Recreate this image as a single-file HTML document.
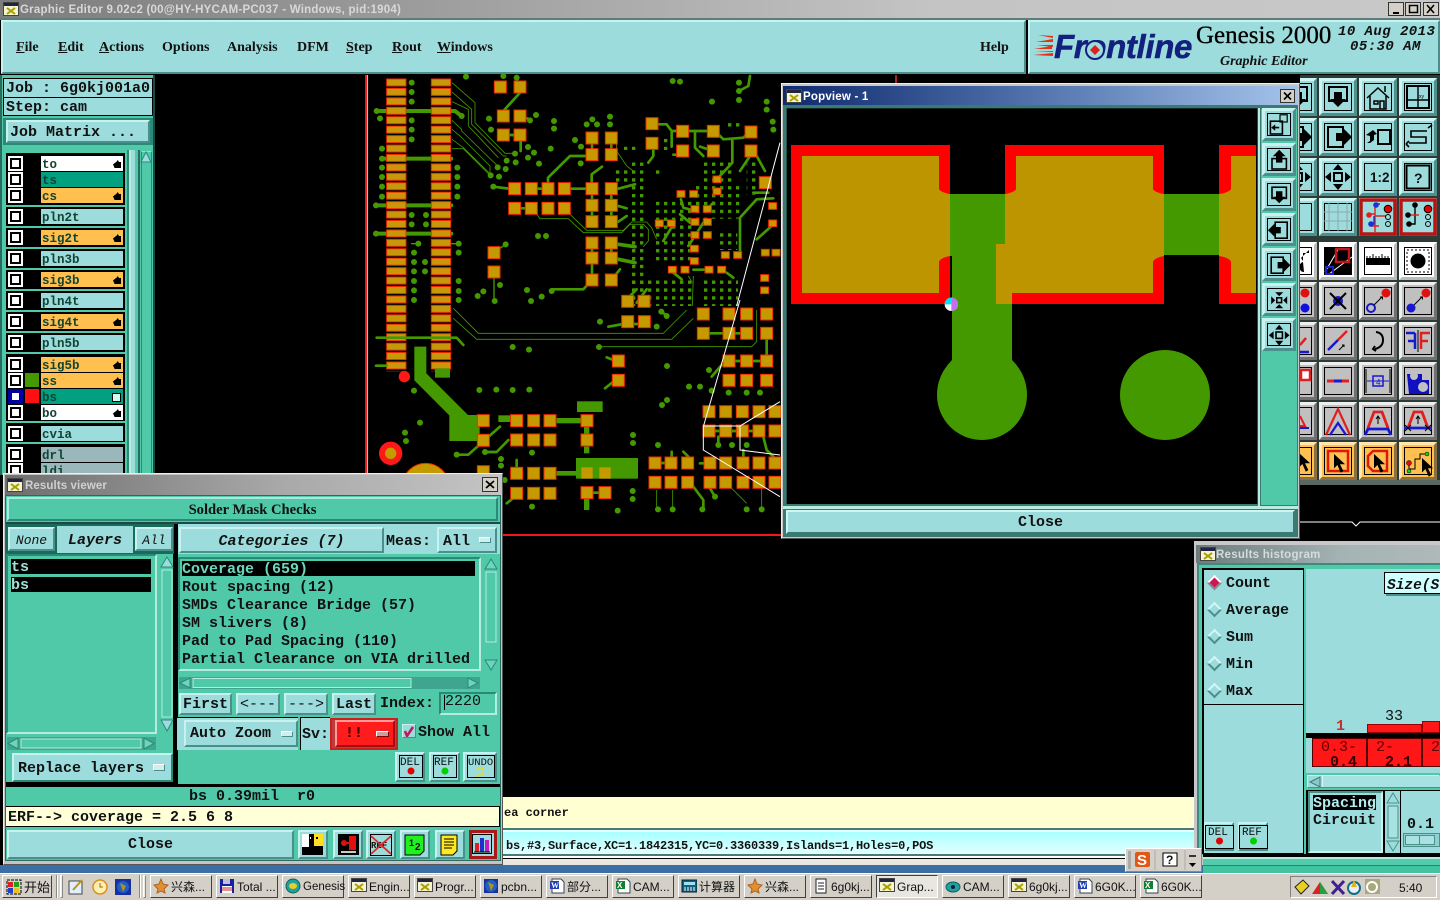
<!DOCTYPE html>
<html><head><meta charset="utf-8"><title>Graphic Editor</title>
<style>
html,body{margin:0;padding:0;width:1440px;height:900px;overflow:hidden;background:#000}
div{position:absolute;box-sizing:border-box}
svg{position:absolute;display:block}
.m{font:bold 15px/18px "Liberation Mono",monospace;color:#111;white-space:pre;margin-top:1px}
.b{display:flex;align-items:center;justify-content:center;background:#9cdcdc;border:2px solid;border-color:#c8f2f0 #4a8f8a #4a8f8a #c8f2f0;font:bold 15px "Liberation Mono",monospace;color:#111;white-space:pre}
.tb{font:bold 11.5px "Liberation Sans",sans-serif;color:#d8d8d8;white-space:pre;line-height:18px;margin-top:1px}
.mn{font:bold 14px/18px "Liberation Serif",serif;color:#111;top:39px;white-space:pre}
.mn u{text-decoration:underline}
.cb{left:8px;width:15px;height:15px;background:#fff}
.cb:after{content:"";position:absolute;left:2px;top:2px;width:11px;height:11px;border:2px solid #000;background:#fff;box-sizing:border-box}
.ln{left:41px;width:82px;height:15px;font:bold 12.5px/18px "Liberation Mono",monospace;color:#143;padding-left:1px;white-space:pre}
.y{background:#ffc050}.w{background:#fff}.g{background:#00a080}.c{background:#9cdcdc}.d{background:#9ab8bc}
.h{position:absolute;right:2px;top:4px;width:8px;height:8px;background:#000;clip-path:polygon(0 55%,45% 20%,60% 0,75% 25%,100% 25%,100% 100%,20% 100%)}
.k{background:#000;left:6px;width:119px}
.task{height:23px;top:875px;background:#d4d0c8;border:1px solid;border-color:#fff #404040 #404040 #fff;font:12px/23px "Liberation Sans","Noto Sans CJK SC",sans-serif;color:#111;white-space:pre;padding-left:20px}
.task svg{left:2px;top:2px}
.rad{left:1209px;width:11px;height:11px;transform:rotate(45deg);background:#9cdcdc;border:2px solid;border-color:#d4f6f4 #4a8f8a #4a8f8a #d4f6f4}
</style></head><body>

<!-- PCB canvas -->
<svg width="1440" height="900" style="left:0;top:0">
<defs>
<rect id="P" x="-18" y="-18" width="36" height="36" fill="#c49a00" stroke="#f02c00" stroke-width="3"/>
<rect id="Q" x="-12" y="-10" width="24" height="20" fill="#c49a00" stroke="#f02c00" stroke-width="3"/>
<circle id="V" r="9" fill="#449900"/>
<pattern id="S" x="78" y="6" width="134" height="28.3" patternUnits="userSpaceOnUse"><rect x="2" y="3" width="58" height="21" fill="#c8980a" stroke="#f02c00" stroke-width="3"/></pattern>
<pattern id="D" width="24" height="23.6" patternUnits="userSpaceOnUse"><rect width="10" height="10" fill="#449900"/></pattern>
<g id="AD" fill="#000"><rect x="10" y="9" width="18" height="14" fill="none" stroke="#000" stroke-width="2"/><path d="M15 14h8v7h4l-8 8-8-8h4z"/></g>
<g id="AU" fill="#000"><rect x="10" y="17" width="18" height="13" fill="none" stroke="#000" stroke-width="2"/><path d="M19 6l8 8h-4v8h-8v-8h-4z"/></g>
<g id="AL" fill="#000"><rect x="14" y="9" width="15" height="20" fill="none" stroke="#000" stroke-width="2"/><path d="M5 19l8-8v4h8v8h-8v4z"/></g>
<g id="AR" fill="#000"><rect x="9" y="9" width="15" height="20" fill="none" stroke="#000" stroke-width="2"/><path d="M33 19l-8-8v4h-8v8h8v4z"/></g>
<g id="ZO" fill="#000"><rect x="16" y="16" width="6" height="6" fill="none" stroke="#000" stroke-width="2"/><path d="M19 14l-5-5h10zM19 24l-5 5h10zM14 19l-5-5v10zM24 19l5-5v10z"/></g>
<g id="ZI" fill="#000"><rect x="15" y="15" width="8" height="8" fill="none" stroke="#000" stroke-width="2"/><path d="M19 6l-5 6h10zM19 32l-5-6h10zM6 19l6-5v10zM32 19l-6-5v10z"/></g>
<g id="BT"><rect width="38" height="38" fill="#9cdcdc"/><path d="M0 0h38l-3 3H3v32l-3 3z" fill="#d0f4f2"/><path d="M38 38H0l3-3h32V3l3-3z" fill="#4f8f8c"/><rect x="5.500" y="5.500" width="27" height="27" fill="none" stroke="#000"/></g>
<g id="BG"><rect width="38" height="38" fill="#c0c0c0"/><path d="M0 0h38l-3 3H3v32l-3 3z" fill="#eee"/><path d="M38 38H0l3-3h32V3l3-3z" fill="#707070"/><rect x="5.500" y="5.500" width="27" height="27" fill="none" stroke="#000"/></g>
<g id="BO"><rect width="38" height="38" fill="#ffc050"/><path d="M0 0h38l-3 3H3v32l-3 3z" fill="#ffe8b0"/><path d="M38 38H0l3-3h32V3l3-3z" fill="#8a7040"/><rect x="5.500" y="5.500" width="27" height="27" fill="none" stroke="#000"/></g>
<g id="BW"><rect width="38" height="38" fill="#fff"/><path d="M38 38H0l3-3h32V3l3-3z" fill="#bbb"/><rect x="5.500" y="5.500" width="27" height="27" fill="#fff" stroke="#000"/></g>
<path id="CU" transform="scale(.85)" d="M0 0v17l4-4 4 9 3-2-4-8h6z" fill="#000"/>
</defs>

<rect x="365" y="75" width="2" height="461" fill="#f01818"/><rect x="367" y="75" width="1" height="461" fill="#a0d8e8"/>
<rect x="365" y="534" width="420" height="2" fill="#f01818"/>
<rect x="895" y="75" width="2" height="10" fill="#b02020"/>

<!-- zoom group A -->
<g transform="translate(360 76) scale(.33333)">
<g fill="none" stroke="#449900" stroke-width="12" stroke-linecap="round" stroke-linejoin="round">
<path d="M60 105H285L305 120M66 248H274M48 388H274M48 473H274"/>
</g>
<rect x="78" y="6" width="62" height="880" fill="url(#S)"/>
<rect x="212" y="6" width="62" height="880" fill="url(#S)"/>
<g fill="url(#D)">
<rect x="792" y="208" width="38" height="14"/><rect x="816" y="256" width="48" height="390"/><rect x="768" y="280" width="48" height="50"/><rect x="888" y="370" width="120" height="190"/><rect x="888" y="280" width="24" height="14"/><rect x="1008" y="328" width="130" height="100"/><rect x="1024" y="256" width="96" height="70"/><rect x="1072" y="462" width="60" height="60"/><rect x="1160" y="256" width="40" height="100"/><rect x="816" y="600" width="180" height="90"/><rect x="1024" y="600" width="110" height="90"/><rect x="1096" y="140" width="48" height="16"/><rect x="912" y="186" width="12" height="36"/>
</g>
<g fill="none" stroke="#449900" stroke-width="8" stroke-linecap="round" stroke-linejoin="round">
<path d="M480 50L430 105M430 177H480M480 120L510 130M482 180V225M564 320V305L630 240H680M695 320V295L726 272M633 338H680M482 397H497M400 332L448 338M533 338H547M696 205V218M696 355V370M696 405V420M696 520V530M696 565V595M754 355V372M754 205V218M754 404V420M754 520V530M775 338L825 325M775 390L800 397M775 437L800 420M696 612L670 640H575M754 612L780 580M895 145H920L935 165H1045M935 165V212M1005 166V215L1030 240M1075 175L1090 190L1150 185L1160 175M1117 190V260L1075 305M1170 240L1140 285M1190 240L1215 285M880 220V240L865 260M1137 45L1165 30L1170 0M963 370L970 395L1005 405M1042 370M1030 440L985 510M960 415L990 440M1240 367L1190 370L1140 425V540M1225 350H1180M1235 450L1190 490M940 445L910 495M1060 380L1042 399M940 590L965 610M1000 581H1040M1100 590L1120 605M940 236H968M1020 212L1060 225M830 640L790 680M860 640L830 680"/>
<path d="M775 505L825 512M775 550L825 560" stroke-width="11"/>
<path d="M402 605V675M402 530L437 505M155 503H175M292 503H274" stroke-width="4"/>
</g>
<g fill="none" stroke="#449900" stroke-width="2.500">
<path d="M276 20L345 80V140L435 232H465M276 48L335 100V145L430 240H440M276 77L325 100V150L415 245M276 133L305 160V165L415 272M276 160L300 180L390 270V295M276 190L310 215L395 298M276 218H310L390 298M770 205V225L800 270L820 285M530 415L540 428H625L670 470H785L810 445H850L865 460V495L850 512M630 415L680 463H790L815 438H860L875 455L890 490M1000 600L997 690M985 600L997 620"/>
</g>
<g>
<use href="#P" x="421" y="33"/><use href="#P" x="480" y="33"/><use href="#P" x="430" y="120"/><use href="#P" x="480" y="120"/><use href="#P" x="430" y="177"/><use href="#P" x="480" y="177"/>
<use href="#P" x="696" y="186"/><use href="#P" x="754" y="186"/><use href="#P" x="696" y="236"/><use href="#P" x="754" y="236"/><use href="#P" x="696" y="338"/><use href="#P" x="754" y="338"/><use href="#P" x="696" y="388"/><use href="#P" x="754" y="388"/><use href="#P" x="696" y="437"/><use href="#P" x="754" y="437"/><use href="#P" x="696" y="501"/><use href="#P" x="754" y="501"/><use href="#P" x="696" y="546"/><use href="#P" x="754" y="546"/><use href="#P" x="696" y="612"/><use href="#P" x="754" y="612"/>
<use href="#P" x="464" y="338"/><use href="#P" x="514" y="338"/><use href="#P" x="564" y="338"/><use href="#P" x="613" y="338"/><use href="#P" x="464" y="397"/><use href="#P" x="514" y="397"/><use href="#P" x="564" y="397"/><use href="#P" x="613" y="397"/><use href="#P" x="402" y="530"/><use href="#P" x="402" y="588"/>
<use href="#P" x="876" y="143"/><use href="#P" x="876" y="202"/><use href="#P" x="968" y="166"/><use href="#P" x="1060" y="166"/><use href="#P" x="968" y="225"/><use href="#P" x="1060" y="225"/><use href="#P" x="1173" y="168"/><use href="#P" x="1173" y="225"/><use href="#P" x="803" y="676"/><use href="#P" x="852" y="676"/>
<use href="#P" x="1216" y="320"/><use href="#Q" x="1071" y="310"/><use href="#Q" x="1071" y="346"/><use href="#Q" x="963" y="354"/><use href="#Q" x="1001" y="354"/><use href="#Q" x="1005" y="399"/><use href="#Q" x="1042" y="399"/><use href="#Q" x="1005" y="438"/><use href="#Q" x="1042" y="438"/><use href="#Q" x="898" y="442"/><use href="#Q" x="934" y="442"/><use href="#Q" x="1005" y="477"/><use href="#Q" x="1042" y="477"/><use href="#Q" x="1003" y="518"/><use href="#Q" x="1003" y="555"/><use href="#Q" x="1096" y="537"/><use href="#Q" x="1133" y="537"/><use href="#Q" x="937" y="581"/><use href="#Q" x="975" y="581"/><use href="#Q" x="1047" y="581"/><use href="#Q" x="1085" y="581"/><use href="#Q" x="1238" y="390"/><use href="#Q" x="1238" y="442"/><use href="#Q" x="1216" y="530"/><use href="#Q" x="1248" y="530"/><use href="#Q" x="1214" y="606"/><use href="#Q" x="1214" y="643"/>
</g>
<g>
<use href="#V" x="155" y="20"/><use href="#V" x="155" y="48"/><use href="#V" x="155" y="77"/><use href="#V" x="155" y="133"/><use href="#V" x="155" y="161"/><use href="#V" x="155" y="190"/><use href="#V" x="155" y="417"/><use href="#V" x="155" y="445"/><use href="#V" x="175" y="503"/><use href="#V" x="162" y="530"/><use href="#V" x="162" y="558"/><use href="#V" x="162" y="586"/><use href="#V" x="162" y="615"/><use href="#V" x="162" y="643"/><use href="#V" x="162" y="672"/>
<use href="#V" x="66" y="218"/><use href="#V" x="66" y="275"/><use href="#V" x="66" y="303"/><use href="#V" x="66" y="332"/><use href="#V" x="66" y="362"/><use href="#V" x="292" y="275"/><use href="#V" x="292" y="303"/><use href="#V" x="292" y="332"/><use href="#V" x="292" y="362"/><use href="#V" x="296" y="503"/><use href="#V" x="296" y="530"/><use href="#V" x="296" y="615"/><use href="#V" x="296" y="645"/><use href="#V" x="296" y="672"/><use href="#V" x="198" y="417"/><use href="#V" x="198" y="445"/><use href="#V" x="195" y="558"/><use href="#V" x="195" y="586"/>
<use href="#V" x="60" y="127"/><use href="#V" x="50" y="105"/><use href="#V" x="66" y="248"/><use href="#V" x="48" y="388"/><use href="#V" x="48" y="473"/><use href="#V" x="305" y="120"/>
<use href="#V" x="318" y="2"/><use href="#V" x="430" y="0"/><use href="#V" x="470" y="5"/><use href="#V" x="510" y="133"/><use href="#V" x="528" y="117"/><use href="#V" x="387" y="128"/><use href="#V" x="393" y="161"/><use href="#V" x="582" y="135"/><use href="#V" x="582" y="158"/><use href="#V" x="504" y="213"/><use href="#V" x="504" y="245"/><use href="#V" x="522" y="230"/><use href="#V" x="537" y="263"/><use href="#V" x="572" y="218"/><use href="#V" x="645" y="192"/><use href="#V" x="663" y="212"/><use href="#V" x="662" y="262"/><use href="#V" x="697" y="130"/><use href="#V" x="680" y="145"/><use href="#V" x="711" y="145"/><use href="#V" x="750" y="122"/><use href="#V" x="750" y="145"/>
<use href="#V" x="938" y="15"/><use href="#V" x="960" y="17"/><use href="#V" x="1137" y="20"/><use href="#V" x="1137" y="45"/><use href="#V" x="1137" y="72"/><use href="#V" x="1056" y="77"/><use href="#V" x="1220" y="77"/><use href="#V" x="1220" y="101"/><use href="#V" x="1238" y="137"/><use href="#V" x="1240" y="161"/>
<use href="#V" x="465" y="233"/><use href="#V" x="440" y="254"/><use href="#V" x="467" y="259"/><use href="#V" x="413" y="274"/><use href="#V" x="437" y="279"/><use href="#V" x="392" y="298"/><use href="#V" x="417" y="302"/><use href="#V" x="400" y="332"/><use href="#V" x="534" y="480"/><use href="#V" x="558" y="480"/><use href="#V" x="437" y="505"/><use href="#V" x="420" y="627"/><use href="#V" x="404" y="675"/><use href="#V" x="370" y="646"/><use href="#V" x="353" y="660"/><use href="#V" x="501" y="642"/><use href="#V" x="545" y="662"/><use href="#V" x="513" y="675"/><use href="#V" x="575" y="645"/>
</g>
<path d="M1260 200L1130 690" stroke="#fff" stroke-width="3" fill="none"/>
</g>

<!-- zoom group B -->
<g transform="translate(360 300) scale(.33333)">
<g fill="none" stroke="#449900" stroke-width="2.500">
<path d="M280 25L355 100H910L980 30M280 55L350 118H935L1000 55M720 140H1175L1190 125V30M1115 565L1160 610M890 570V625M938 570V625M1205 565V625"/>
</g>
<g fill="#449900">
<path d="M163 140h36v80l125 125h35v78h-91v-77l-105-105z"/><rect x="225" y="205" width="45" height="28"/>
<rect x="651" y="304" width="77" height="32"/><rect x="648" y="474" width="186" height="62"/><rect x="590" y="354" width="75" height="16"/><rect x="590" y="513" width="60" height="14"/><rect x="672" y="378" width="16" height="26"/>
<rect x="415" y="346" width="40" height="20"/><rect x="672" y="440" width="16" height="20"/><rect x="672" y="595" width="16" height="35"/>
</g>
<g fill="none" stroke="#449900" stroke-width="8" stroke-linecap="round" stroke-linejoin="round">
<path d="M50 113H290L310 135M48 197H80M290 464H325L420 380M375 456H410L445 420M740 172L760 180M745 80L790 72H850M735 265L760 245M1050 100H1090M1125 100H1145M1125 183H1145M1180 183H1205M1220 120V165M1055 230L1085 195M905 35L920 48M1075 410V435M1115 393H1130M1060 393H1075M1165 393H1180M1210 410L1220 450L1250 480M1000 560L1030 600V625M1050 565L1065 590M1150 450V470M935 455V470M970 455L985 470M1020 490H1030M470 480V500M905 489H915M440 610L465 590M700 578H715"/>
</g>
<g>
<use href="#P" x="370" y="362"/><use href="#P" x="370" y="421"/><use href="#P" x="470" y="362"/><use href="#P" x="521" y="362"/><use href="#P" x="570" y="362"/><use href="#P" x="681" y="362"/><use href="#P" x="470" y="420"/><use href="#P" x="521" y="420"/><use href="#P" x="570" y="420"/><use href="#P" x="681" y="420"/><use href="#P" x="370" y="515"/><use href="#P" x="470" y="520"/><use href="#P" x="521" y="520"/><use href="#P" x="570" y="520"/><use href="#P" x="470" y="580"/><use href="#P" x="521" y="580"/><use href="#P" x="570" y="580"/><use href="#P" x="681" y="578"/><use href="#P" x="735" y="578"/>
<rect x="664" y="502" width="34" height="34" fill="#c49a00"/><rect x="718" y="502" width="34" height="34" fill="#c49a00"/>
<use href="#P" x="775" y="183"/><use href="#P" x="775" y="241"/><use href="#P" x="803" y="65"/><use href="#P" x="853" y="65"/>
<use href="#P" x="1030" y="42"/><use href="#P" x="1030" y="100"/><use href="#P" x="1107" y="42"/><use href="#P" x="1107" y="100"/><use href="#P" x="1160" y="42"/><use href="#P" x="1160" y="100"/><use href="#P" x="1220" y="42"/><use href="#P" x="1220" y="100"/><use href="#P" x="1107" y="183"/><use href="#P" x="1160" y="183"/><use href="#P" x="1220" y="183"/><use href="#P" x="1107" y="241"/><use href="#P" x="1160" y="241"/><use href="#P" x="1220" y="241"/>
<use href="#P" x="1047" y="335"/><use href="#P" x="1097" y="335"/><use href="#P" x="1147" y="335"/><use href="#P" x="1197" y="335"/><use href="#P" x="1245" y="335"/><use href="#P" x="1047" y="393"/><use href="#P" x="1097" y="393"/><use href="#P" x="1147" y="393"/><use href="#P" x="1197" y="393"/><use href="#P" x="1245" y="393"/>
<use href="#P" x="885" y="489"/><use href="#P" x="933" y="489"/><use href="#P" x="983" y="489"/><use href="#P" x="1050" y="489"/><use href="#P" x="1097" y="489"/><use href="#P" x="1149" y="489"/><use href="#P" x="1197" y="489"/><use href="#P" x="1245" y="489"/><use href="#P" x="885" y="547"/><use href="#P" x="933" y="547"/><use href="#P" x="983" y="547"/><use href="#P" x="1050" y="547"/><use href="#P" x="1097" y="547"/><use href="#P" x="1149" y="547"/><use href="#P" x="1197" y="547"/><use href="#P" x="1245" y="547"/>
</g>
<circle cx="133" cy="230" r="17" fill="#ff1818"/><circle cx="92" cy="460" r="35" fill="#ff1818"/><circle cx="92" cy="460" r="17" fill="#c49a00"/>
<circle cx="197" cy="560" r="70" fill="#c49a00" stroke="#f02c00" stroke-width="3"/>
<g>
<use href="#V" x="162" y="272"/><use href="#V" x="358" y="270"/><use href="#V" x="409" y="269"/><use href="#V" x="458" y="270"/><use href="#V" x="508" y="269"/><use href="#V" x="180" y="368"/><use href="#V" x="135" y="398"/><use href="#V" x="138" y="423"/><use href="#V" x="458" y="141"/><use href="#V" x="507" y="149"/><use href="#V" x="720" y="65"/><use href="#V" x="890" y="80"/><use href="#V" x="717" y="141"/><use href="#V" x="921" y="198"/><use href="#V" x="1047" y="210"/><use href="#V" x="987" y="260"/><use href="#V" x="1020" y="260"/><use href="#V" x="921" y="300"/><use href="#V" x="906" y="315"/><use href="#V" x="819" y="405"/><use href="#V" x="819" y="429"/><use href="#V" x="894" y="435"/><use href="#V" x="516" y="458"/><use href="#V" x="423" y="477"/><use href="#V" x="423" y="497"/><use href="#V" x="818" y="573"/><use href="#V" x="818" y="597"/><use href="#V" x="516" y="620"/><use href="#V" x="773" y="632"/><use href="#V" x="434" y="540"/><use href="#V" x="290" y="464"/><use href="#V" x="375" y="456"/><use href="#V" x="1116" y="435"/><use href="#V" x="1160" y="435"/><use href="#V" x="1075" y="435"/><use href="#V" x="1160" y="628"/><use href="#V" x="1205" y="628"/><use href="#V" x="894" y="628"/><use href="#V" x="938" y="628"/><use href="#V" x="1027" y="628"/><use href="#V" x="1065" y="590"/><use href="#V" x="904" y="35"/><use href="#V" x="920" y="48"/><use href="#V" x="1106" y="278"/><use href="#V" x="1160" y="278"/><use href="#V" x="1200" y="278"/><use href="#V" x="1055" y="272"/>
</g>
<path d="M1140 0L1085 190L1030 380V450L1260 590M1030 378H1140L1260 305M1140 378V450L1260 465" stroke="#fff" stroke-width="3" fill="none"/>
</g>
<path d="M1300 522H1352L1356 526L1360 522H1440" fill="none" stroke="#fff"/>
</svg>

<!-- top title -->
<div style="left:0;top:0;width:1440px;height:18px;background:linear-gradient(90deg,#7c7c7c,#c4c4c4 65%,#c8c8c8)"></div>
<svg width="16" height="14" style="left:3px;top:2px"><rect x=".5" y=".5" width="15" height="13" fill="#f4f4d0" stroke="#444"/><rect x="1" y="1" width="14" height="3" fill="#224"/><path d="M4 6l8 6M12 6l-8 6" stroke="#a8a000" stroke-width="2"/></svg>
<div class="tb" style="left:20px;top:0;letter-spacing:.23px">Graphic Editor 9.02c2 (00@HY-HYCAM-PC037 - Windows, pid:1904)</div>
<svg width="54" height="16" style="left:1386px;top:1px"><g fill="#d4d0c8" stroke="#333"><rect x="2.500" y="1.500" width="15" height="13"/><rect x="19.500" y="1.500" width="15" height="13"/><rect x="37.500" y="1.500" width="15" height="13"/></g><path d="M7 12h6" stroke="#000" stroke-width="2"/><rect x="23.500" y="4.500" width="8" height="7" fill="none" stroke="#000" stroke-width="1.500"/><path d="M41 4l7 8M48 4l-7 8" stroke="#000" stroke-width="1.600"/></svg>
<div style="left:0;top:18px;width:1440px;height:2px;background:#5e7c7a"></div>

<!-- menu -->
<div class="b" style="left:1px;top:20px;width:1025px;height:54px;justify-content:flex-start"></div>
<div class="mn" style="left:16px"><u>F</u>ile</div><div class="mn" style="left:58px"><u>E</u>dit</div><div class="mn" style="left:99px"><u>A</u>ctions</div><div class="mn" style="left:162px">Options</div><div class="mn" style="left:227px">Analysis</div><div class="mn" style="left:297px">DFM</div><div class="mn" style="left:346px"><u>S</u>tep</div><div class="mn" style="left:392px"><u>R</u>out</div><div class="mn" style="left:437px"><u>W</u>indows</div><div class="mn" style="left:980px">Help</div>
<div class="b" style="left:1028px;top:20px;width:412px;height:54px"></div>
<svg width="24" height="26" style="left:1032px;top:34px"><path d="M2 15l18-3v3zM4 8l17-3v3zM6 1l15 1v2zM1 21l20-2v3z" fill="#e83018"/><path d="M5 11h16v2zM3 18h18v-1z" fill="#e83018"/></svg>
<div style="left:1054px;top:27px;font:italic bold 33px/40px 'Liberation Sans',sans-serif;color:#14207e;letter-spacing:-.35px;white-space:pre;-webkit-text-stroke:.5px #14207e">Frontline</div>
<svg width="24" height="24" style="left:1083px;top:38px"><circle cx="12" cy="12" r="9" fill="#9cdcdc" stroke="#14207e" stroke-width="2"/><path d="M12 7l5 5-5 5-5-5z" fill="#e02020"/></svg>
<div style="left:1196px;top:21px;font:25px/30px 'Liberation Serif',serif;color:#000;white-space:pre;-webkit-text-stroke:.3px #000">Genesis 2000</div>
<div style="left:1220px;top:53px;font:italic bold 14px/18px 'Liberation Serif',serif;color:#111;white-space:pre">Graphic Editor</div>
<div style="left:1338px;top:24px;font:italic bold 14px/16px 'Liberation Mono',monospace;color:#111;white-space:pre;letter-spacing:.45px">10 Aug 2013</div>
<div style="left:1350px;top:39px;font:italic bold 14px/16px 'Liberation Mono',monospace;color:#111;white-space:pre;letter-spacing:.45px">05:30 AM</div>

<!-- left panel -->
<div style="left:0;top:75px;width:155px;height:400px;background:#4fc9a8"></div>
<div style="left:0;top:75px;width:2px;height:400px;background:#2a6a60"></div>
<div style="left:3px;top:78px;width:150px;height:20px;background:#9cdcdc;border:1px solid #000"></div>
<div class="m" style="left:6px;top:78px;line-height:19px">Job : 6g0kj001a0</div>
<div style="left:3px;top:97px;width:150px;height:19px;background:#9cdcdc;border:1px solid #000"></div>
<div class="m" style="left:6px;top:97px;line-height:19px">Step: cam</div>
<div style="left:3px;top:118px;width:150px;height:27px;background:#2a8a78"></div>
<div class="b" style="left:6px;top:120px;width:144px;height:23px;justify-content:flex-start;padding-left:2px;padding-top:2px">Job Matrix ...</div>

<div style="left:127px;top:150px;width:8px;height:325px;background:linear-gradient(90deg,#2c8a76 25%,#b8ecdf 25%,#b8ecdf 50%,#9cdcdc 50%)"></div>
<div style="left:138px;top:150px;width:2px;height:325px;background:#2a6a60"></div>
<div style="left:141px;top:151px;width:11px;height:324px;background:#4fc9a8;border:1px solid;border-color:#9cdcdc #2a8a78"></div>
<svg width="12" height="12" style="left:140px;top:151px"><path d="M6 1L11 11H1z" fill="#9cdcdc" stroke="#2a8a78"/></svg>
<div style="left:153px;top:75px;width:2px;height:400px;background:#1c4a44"></div>

<div class="k" style="top:153px;height:52px"></div><div class="k" style="top:207px;height:19px"></div><div class="k" style="top:228px;height:19px"></div><div class="k" style="top:249px;height:19px"></div><div class="k" style="top:270px;height:19px"></div><div class="k" style="top:291px;height:19px"></div><div class="k" style="top:312px;height:19px"></div><div class="k" style="top:333px;height:19px"></div><div class="k" style="top:354px;height:67px"></div><div class="k" style="top:423px;height:19px"></div><div class="k" style="top:444px;height:30px"></div>

<div class="cb" style="top:156px"></div><div class="ln w" style="top:156px">to<i class="h"></i></div>
<div class="cb" style="top:172px"></div><div class="ln g" style="top:172px">ts</div>
<div class="cb" style="top:188px"></div><div class="ln y" style="top:188px">cs<i class="h"></i></div>
<div class="cb" style="top:209px"></div><div class="ln c" style="top:209px">pln2t</div>
<div class="cb" style="top:230px"></div><div class="ln y" style="top:230px">sig2t<i class="h"></i></div>
<div class="cb" style="top:251px"></div><div class="ln c" style="top:251px">pln3b</div>
<div class="cb" style="top:272px"></div><div class="ln y" style="top:272px">sig3b<i class="h"></i></div>
<div class="cb" style="top:293px"></div><div class="ln c" style="top:293px">pln4t</div>
<div class="cb" style="top:314px"></div><div class="ln y" style="top:314px">sig4t<i class="h"></i></div>
<div class="cb" style="top:335px"></div><div class="ln c" style="top:335px">pln5b</div>
<div class="cb" style="top:357px"></div><div class="ln y" style="top:357px">sig5b<i class="h"></i></div>
<div class="cb" style="top:373px"></div><div class="ln y" style="top:373px">ss<i class="h"></i></div>
<div style="left:25px;top:373px;width:14px;height:14px;background:#449900"></div>
<div style="left:8px;top:389px;width:15px;height:15px;background:#0000a0"></div><div style="left:12px;top:393px;width:7px;height:7px;background:#fff"></div>
<div style="left:25px;top:389px;width:14px;height:14px;background:#ff1010"></div>
<div class="ln g" style="top:389px">bs<i style="position:absolute;right:2px;top:4px;width:7px;height:7px;border:1px solid #000;background:#cfe"></i></div>
<div class="cb" style="top:405px"></div><div class="ln w" style="top:405px">bo<i class="h"></i></div>
<div class="cb" style="top:426px"></div><div class="ln c" style="top:426px">cvia</div>
<div class="cb" style="top:447px"></div><div class="ln d" style="top:447px">drl</div>
<div class="cb" style="top:463px"></div><div class="ln d" style="top:463px">ldi</div>

<!-- right icon panel -->
<svg width="140" height="412" viewBox="1300 75 140 412" style="left:1300px;top:75px">
<rect x="1300" y="75" width="140" height="408" fill="#2c3a38"/><rect x="1300" y="480" width="140" height="5" fill="#5a6660"/><rect x="1300" y="485" width="140" height="2" fill="#000"/>
<!-- row 1 -->
<use href="#BT" x="1279" y="78"/><use href="#BT" x="1319" y="78"/><use href="#BT" x="1359" y="78"/><use href="#BT" x="1399" y="78"/>
<g transform="translate(1279 78)"><use href="#AD"/></g><g transform="translate(1319 78)"><use href="#AD"/></g>
<g transform="translate(1359 78)" fill="none" stroke="#000" stroke-width="1.500"><path d="M8 20L19 10l11 10M11 18v13h16V18M15 23h4v3h-4zM21 23h4v8h-4zM26 14V8"/></g>
<g transform="translate(1399 78)" fill="none" stroke="#000" stroke-width="2"><rect x="8" y="8" width="22" height="22"/><path d="M19 8v22M8 22h22" stroke-width="1.400"/><text x="20" y="20" font-family="Liberation Sans" font-size="5" stroke="none" fill="#000">xy</text></g>
<!-- row 2 -->
<use href="#BT" x="1279" y="118"/><use href="#BT" x="1319" y="118"/><use href="#BT" x="1359" y="118"/><use href="#BT" x="1399" y="118"/>
<g transform="translate(1279 118)"><use href="#AR"/></g><g transform="translate(1319 118)"><use href="#AR"/></g>
<g transform="translate(1359 118)"><rect x="19" y="12" width="12" height="14" fill="none" stroke="#000" stroke-width="2"/><path d="M14 12l-7 5 4 1v5l-3 2h3l4-3v-5l3-1z"/></g>
<g transform="translate(1399 118)" fill="none" stroke="#000" stroke-width="2"><path d="M28 13H12v6h15v6H10M29 10l4-3M7 26l3 3M7 26l3-3" stroke-width="1.600"/></g>
<!-- row 3 -->
<use href="#BT" x="1279" y="158"/><use href="#BT" x="1319" y="158"/><use href="#BT" x="1359" y="158"/><use href="#BT" x="1399" y="158"/>
<g transform="translate(1279 158)"><use href="#ZI"/></g><g transform="translate(1319 158)"><use href="#ZI"/></g>
<text x="1370" y="182" font-family="Liberation Sans" font-size="13.500" font-weight="bold" fill="#111">1:2</text>
<g><rect x="1406.500" y="165.500" width="23" height="23" fill="none" stroke="#000" stroke-width="2"/><text x="1414" y="183" font-family="Liberation Sans" font-size="14" font-weight="bold" fill="#111">?</text></g>
<!-- row 4 -->
<use href="#BT" x="1279" y="198"/><use href="#BT" x="1319" y="198"/><use href="#BT" x="1359" y="198"/><use href="#BT" x="1399" y="198"/>
<path d="M1329 203v28M1338 203v28M1347 203v28M1324 212h28M1324 221h28" stroke="#90a8a8" stroke-width="1"/>
<g transform="translate(1359 198)"><rect x="2" y="2" width="34" height="34" fill="#9cdcdc" stroke="#b81414" stroke-width="3.500"/><path d="M9 16h7v18M16 8v10h11M12 28h8" fill="none" stroke="#e02020" stroke-width="1.400"/><path d="M16 6h5M10 26h5v-8" fill="none" stroke="#2030d0" stroke-width="1.400"/><circle cx="10" cy="17" r="2.800" fill="#e02020"/><circle cx="17" cy="7" r="2.800" fill="#2030d0"/><circle cx="12" cy="26" r="2.800" fill="#2030d0"/><circle cx="29" cy="11" r="3.800" fill="#e00000" stroke="#000"/><circle cx="29" cy="19" r="2.500" fill="none" stroke="#000"/><circle cx="29" cy="26" r="2.500" fill="none" stroke="#000"/></g>
<g transform="translate(1399 198)"><rect x="2" y="2" width="34" height="34" fill="#9cdcdc" stroke="#b81414" stroke-width="3.500"/><path d="M16 8v18h-6" fill="none" stroke="#000" stroke-width="1.400"/><path d="M10 17h10" stroke="#e02020" stroke-width="1.400"/><circle cx="16" cy="7" r="2.800"/><circle cx="9" cy="17" r="2.800"/><circle cx="10" cy="26" r="2.800"/><circle cx="29" cy="11" r="3.800" fill="#e00000" stroke="#000"/><circle cx="29" cy="19" r="2.500" fill="none" stroke="#000"/><circle cx="29" cy="26" r="2.500" fill="none" stroke="#000"/></g>
<!-- row 5 -->
<use href="#BW" x="1279" y="242"/><use href="#BW" x="1319" y="242"/><use href="#BW" x="1359" y="242"/><use href="#BW" x="1399" y="242"/>
<path d="M1301 258l8-8v3h-6v8zM1303 262a4 5 0 1 0 1 10z" fill="#000"/>
<g transform="translate(1319 242)"><rect x="5" y="5" width="28" height="28" fill="#000"/><path d="M6 30L20 6M10 32L33 15" stroke="#fff" stroke-width="1"/><rect x="17" y="7" width="13" height="13" fill="none" stroke="#c01818" stroke-width="2.500"/><rect x="7" y="25" width="7" height="7" fill="none" stroke="#2020d0" stroke-width="2"/></g>
<g transform="translate(1359 242)"><rect x="7" y="16" width="24" height="7" fill="#000"/><path d="M8 14v4M11 14v4M14 12v4M17 14v4M20 14v4M23 12v4M26 14v4M29 14v4" stroke="#000"/></g>
<g transform="translate(1399 242)"><rect x="8" y="8" width="22" height="22" fill="none" stroke="#000" stroke-dasharray="2 2"/><circle cx="19" cy="19" r="7.500" fill="#000"/></g>
<!-- row 6 -->
<use href="#BG" x="1279" y="282"/><use href="#BG" x="1319" y="282"/><use href="#BG" x="1359" y="282"/><use href="#BG" x="1399" y="282"/>
<circle cx="1305" cy="293" r="4.500" fill="#e01010"/><circle cx="1305" cy="308" r="4.500" fill="#1010e0"/>
<g transform="translate(1319 282)"><circle cx="19" cy="19" r="5" fill="#1818c0"/><path d="M11 11L27 27M27 11L11 27" stroke="#000" stroke-width="2"/></g>
<g transform="translate(1359 282)"><circle cx="12" cy="26" r="4" fill="none" stroke="#1818d0" stroke-width="2"/><circle cx="27" cy="11" r="4.500" fill="#e01010"/><path d="M15 23l8-8M21 15h2.500v2.500" stroke="#000" fill="none"/></g>
<g transform="translate(1399 282)"><circle cx="12" cy="26" r="4.500" fill="#1818d0"/><circle cx="27" cy="11" r="4.500" fill="#e01010"/><path d="M15 23l8-8M21 15h2.500v2.500" stroke="#000" fill="none"/></g>
<!-- row 7 -->
<use href="#BG" x="1279" y="322"/><use href="#BG" x="1319" y="322"/><use href="#BG" x="1359" y="322"/><use href="#BG" x="1399" y="322"/>
<path d="M1300 345l6-7" stroke="#e02020" stroke-width="2.500"/><path d="M1300 352h9" stroke="#1818d0" stroke-width="2.500"/>
<g transform="translate(1319 322)"><path d="M9 28L19 18" stroke="#1818d0" stroke-width="2.500"/><path d="M19 18L28 9" stroke="#e02020" stroke-width="2.500"/><path d="M20 28l5-5M23 23h2v2" stroke="#000" fill="none"/></g>
<g transform="translate(1359 322)"><path d="M17 10q7 1 7 8t-8 9M16 24l-2 3 3 2" fill="none" stroke="#000" stroke-width="2"/></g>
<g transform="translate(1399 322)"><path d="M19 8v22" stroke="#000"/><path d="M16 11H7M16 19H9M16 11v16" stroke="#1818d0" stroke-width="2.500" fill="none"/><path d="M22 27V11h9M22 19h7" stroke="#e02020" stroke-width="2.500" fill="none"/></g>
<!-- row 8 -->
<use href="#BG" x="1279" y="362"/><use href="#BG" x="1319" y="362"/><use href="#BG" x="1359" y="362"/><use href="#BG" x="1399" y="362"/>
<rect x="1301" y="370" width="9" height="10" fill="#fff" stroke="#e02020" stroke-width="2.500"/>
<g transform="translate(1319 362)"><path d="M8 19h7M23 19h7" stroke="#e02020" stroke-width="3"/><path d="M15 19h8" stroke="#1818d0" stroke-width="3"/></g>
<g transform="translate(1359 362)" fill="none" stroke="#1818d0"><path d="M7 7v24M31 7v24" stroke="#000"/><path d="M8 19h22"/><rect x="14" y="14" width="10" height="10" stroke-width="1.500"/><text x="17" y="23" font-size="8" font-family="Liberation Sans" fill="#1818d0" stroke="none">4</text></g>
<g transform="translate(1399 362)"><path d="M8 12h15v6h7v14H10z" fill="#1010c0"/><circle cx="15" cy="14" r="4" fill="#c0c0c0"/><circle cx="24" cy="25" r="5" fill="#c0c0c0"/></g>
<!-- row 9 -->
<use href="#BG" x="1279" y="402"/><use href="#BG" x="1319" y="402"/><use href="#BG" x="1359" y="402"/><use href="#BG" x="1399" y="402"/>
<path d="M1300 416l5 10-5 0" fill="none" stroke="#e02020" stroke-width="2"/><path d="M1300 428h9" stroke="#1818d0" stroke-width="2"/>
<g transform="translate(1319 402)" fill="none" stroke-width="2.200"><path d="M7 33L19 7l12 26" stroke="#e02020"/><path d="M11 33l8-12 8 12" stroke="#1818d0"/></g>
<g transform="translate(1359 402)" fill="none" stroke-width="2.800"><path d="M9 26l6-16h8l6 16" stroke="#e02020"/><path d="M6 33l3-6h20l3 6" stroke="#1818d0"/><path d="M19 22v-7M17 17l2-3 2 3" stroke="#000" stroke-width="1"/></g>
<g transform="translate(1399 402)" fill="none" stroke-width="2.800"><path d="M9 26l6-16h8l6 16" stroke="#e02020"/><path d="M5 26h28" stroke="#1818d0"/><path d="M19 22v-7M17 17l2-3 2 3M6 23l6 6M12 23l-6 6M26 23l6 6M32 23l-6 6" stroke="#000" stroke-width="1"/></g>
<!-- row 10 -->
<use href="#BO" x="1279" y="442"/><use href="#BO" x="1319" y="442"/><use href="#BO" x="1359" y="442"/><use href="#BO" x="1399" y="442"/>
<use href="#CU" x="1299" y="453"/>
<g transform="translate(1319 442)"><rect x="9" y="9" width="20" height="20" fill="none" stroke="#e01808" stroke-width="2.500"/><use href="#CU" x="15" y="12"/></g>
<g transform="translate(1359 442)"><path d="M14 9h14v20H14l-5-5V14z" fill="none" stroke="#e01808" stroke-width="2.500"/><use href="#CU" x="15" y="12"/></g>
<g transform="translate(1399 442)"><path d="M10 27h6v-10h5v-5h5M10 27v-5" fill="none" stroke="#000" stroke-width="1"/><circle cx="10" cy="21" r="2.500" fill="#e01010" stroke="#000" stroke-width=".5"/><circle cx="10" cy="29" r="2" fill="#20d020" stroke="#000" stroke-width=".5"/><circle cx="28" cy="12" r="2" fill="#20d020" stroke="#000" stroke-width=".5"/><use href="#CU" x="23" y="16"/></g>
</svg>

<!-- middle bars -->
<div style="left:500px;top:797px;width:696px;height:31px;background:#ffffd2"></div>
<div style="left:500px;top:828px;width:696px;height:2px;background:#4a7a74"></div><div style="left:500px;top:830px;width:696px;height:2px;background:#e8ffff"></div>
<div style="left:500px;top:832px;width:696px;height:22px;background:linear-gradient(180deg,#a8ffff,#e4ffff)"></div>
<div style="left:500px;top:854px;width:696px;height:2px;background:#4a7a74"></div><div style="left:500px;top:856px;width:696px;height:2px;background:#fff"></div><div style="left:500px;top:858px;width:696px;height:1px;background:#000"></div><div style="left:500px;top:859px;width:696px;height:6px;background:#e8e8e0"></div>
<div class="m" style="left:504px;top:804px;font-size:12px;line-height:16px">ea corner</div>
<div class="m" style="left:506px;top:837px;font-size:12px;line-height:16px;letter-spacing:-.2px">bs,#3,Surface,XC=1.1842315,YC=0.3360339,Islands=1,Holes=0,POS</div>

<!-- results histogram -->
<div style="left:1194px;top:541px;width:246px;height:332px;background:#c8c8c8"></div>
<div style="left:1196px;top:545px;width:244px;height:18px;background:linear-gradient(90deg,#6c7c7c,#a4b4b4 60%,#b0b8b8)"></div>
<svg width="16" height="14" style="left:1200px;top:547px"><rect x=".5" y=".5" width="15" height="13" fill="#f4f4d0" stroke="#444"/><rect x="1" y="1" width="14" height="3" fill="#224"/><path d="M4 6l8 6M12 6l-8 6" stroke="#a8a000" stroke-width="2"/></svg>
<div class="tb" style="left:1216px;top:545px;color:#d4dcdc;letter-spacing:.25px">Results histogram</div>
<div style="left:1197px;top:563px;width:243px;height:292px;background:#3f8a80"></div>
<div style="left:1199px;top:565px;width:241px;height:290px;background:#4fc9a8"></div>
<div style="left:1202px;top:568px;width:102px;height:286px;background:#9cdcdc;border:1px solid #000;border-width:2px 1px 1px 2px"></div>
<div style="left:1202px;top:704px;width:102px;height:1px;background:#000"></div>
<div class="rad" style="top:577px;background:#c81858;border-color:#fff #888 #888 #fff"></div><div class="rad" style="top:604px"></div><div class="rad" style="top:631px"></div><div class="rad" style="top:658px"></div><div class="rad" style="top:685px"></div>
<div class="m" style="left:1226px;top:574px">Count</div><div class="m" style="left:1226px;top:601px">Average</div><div class="m" style="left:1226px;top:628px">Sum</div><div class="m" style="left:1226px;top:655px">Min</div><div class="m" style="left:1226px;top:682px">Max</div>
<div class="b" style="left:1204px;top:822px;width:30px;height:29px"></div><div class="b" style="left:1238px;top:822px;width:30px;height:29px"></div>
<svg width="66" height="24" style="left:1205px;top:825px"><rect x=".5" y=".5" width="28" height="23" fill="#9cdcdc" stroke="#000"/><rect x="34.500" y=".5" width="28" height="23" fill="#9cdcdc" stroke="#000"/><text x="3" y="10" font-family="Liberation Mono" font-size="11" fill="#111">DEL</text><text x="37" y="10" font-family="Liberation Mono" font-size="11" fill="#111">REF</text><circle cx="14.500" cy="16" r="3.500" fill="#e00000"/><circle cx="48.500" cy="16" r="3.500" fill="#00d000"/></svg>
<div style="left:1306px;top:569px;width:134px;height:164px;background:#9cdcdc"></div>
<div style="left:1384px;top:572px;width:56px;height:22px;background:#d0ffff;border:1px solid #000;border-right:0;box-shadow:2px 2px 0 #4a8f8a"></div>
<div class="m" style="left:1387px;top:576px;font-style:italic;font-size:14.500px">Size(S</div>
<div style="left:1306px;top:733px;width:134px;height:5px;background:#000"></div>
<div style="left:1336px;top:719px;font:bold 15px/16px 'Liberation Mono',monospace;color:#c83030">1</div>
<div style="left:1385px;top:709px;font:15px/16px 'Liberation Mono',monospace;color:#111">33</div>
<div style="left:1367px;top:724px;width:55px;height:9px;background:#ff1616;border:1px solid #900"></div><div style="left:1422px;top:721px;width:18px;height:12px;background:#ff1616;border:1px solid #900"></div>
<div style="left:1306px;top:738px;width:134px;height:35px;background:#9cdcdc"></div>
<div style="left:1312px;top:738px;width:55px;height:29px;background:#ff1616;border:1px solid #500;overflow:hidden"></div><div style="left:1367px;top:738px;width:55px;height:29px;background:#ff1616;border:1px solid #500"></div><div style="left:1422px;top:738px;width:18px;height:29px;background:#ff1616;border:1px solid #500;border-right:0"></div>
<div style="left:1321px;top:740px;font:15px/16px 'Liberation Mono',monospace;color:#600">0.3-</div><div style="left:1330px;top:755px;height:12px;overflow:hidden;font:bold 15px/16px 'Liberation Mono',monospace;color:#300">0.4</div>
<div style="left:1376px;top:740px;font:15px/16px 'Liberation Mono',monospace;color:#600">2-</div><div style="left:1385px;top:755px;height:12px;overflow:hidden;font:bold 15px/16px 'Liberation Mono',monospace;color:#300">2.1</div>
<div style="left:1431px;top:740px;font:15px/16px 'Liberation Mono',monospace;color:#600">2</div>
<div style="left:1307px;top:775px;width:133px;height:13px;background:#9cdcdc;border:1px solid;border-color:#c8f2f0 #4a8f8a #4a8f8a #c8f2f0"></div><div style="left:1322px;top:776px;width:118px;height:11px;background:#a6e2e2;border-left:1px solid #d8f4f4"></div>
<svg width="12" height="12" style="left:1309px;top:776px"><path d="M1 6L11 1V11z" fill="#8cc8c8" stroke="#3a7a78"/></svg>
<div style="left:1306px;top:790px;width:134px;height:65px;background:#000"></div>
<div style="left:1308px;top:791px;width:75px;height:62px;background:#9cdcdc;border:2px solid;border-color:#4a8f8a #c8f2f0 #c8f2f0 #4a8f8a"></div>
<div class="m" style="left:1313px;top:795px;width:63px;height:15px;background:#000;color:#b4ecec;line-height:17px;margin-top:0">Spacing</div><div class="m" style="left:1313px;top:811px">Circuit</div>
<div style="left:1385px;top:791px;width:15px;height:62px;background:#9cdcdc"></div>
<svg width="14" height="60" style="left:1386px;top:792px"><path d="M7 1L13 11H1zM7 59L13 49H1z" fill="#9cdcdc" stroke="#4a8f8a"/><rect x="2" y="14" width="10" height="32" fill="#a8e2e2" stroke="#4a8f8a"/></svg>
<div style="left:1401px;top:791px;width:39px;height:62px;background:#9cdcdc"></div>
<div class="m" style="left:1407px;top:815px">0.1</div>
<div style="left:1403px;top:833px;width:37px;height:14px;background:#8ed0d0;border:1px solid #4a8f8a"></div><div style="left:1405px;top:835px;width:18px;height:10px;background:#a8e2e2;border:1px solid #4a8f8a"></div><div style="left:1419px;top:835px;width:16px;height:10px;background:#a8e2e2;border:1px solid #4a8f8a"></div>
<div style="left:1203px;top:854px;width:237px;height:3px;background:#000"></div>
<div style="left:1203px;top:857px;width:237px;height:2px;background:#b4ecdf"></div>
<div style="left:1203px;top:859px;width:237px;height:6px;background:#52ccac"></div>
<div style="left:1203px;top:865px;width:237px;height:1px;background:#000"></div>
<div style="left:1203px;top:866px;width:237px;height:7px;background:#3fc49f"></div>

<!-- popview -->
<div style="left:781px;top:83px;width:519px;height:456px;background:#c8c8c8;border:1px solid;border-color:#eee #555 #555 #eee"></div>
<div style="left:783px;top:86px;width:515px;height:19px;background:linear-gradient(90deg,#0f2a6e,#4c6da8 45%,#a4c4ec)"></div>
<svg width="16" height="14" style="left:786px;top:89px"><rect x=".5" y=".5" width="15" height="13" fill="#f4f4d0" stroke="#444"/><rect x="1" y="1" width="14" height="3" fill="#224"/><path d="M4 6l8 6M12 6l-8 6" stroke="#a8a000" stroke-width="2"/></svg>
<div class="tb" style="left:803px;top:87px;color:#fff;letter-spacing:.2px">Popview - 1</div>
<svg width="15" height="14" style="left:1280px;top:89px"><rect x=".5" y=".5" width="14" height="13" fill="#d4d0c8" stroke="#333"/><path d="M4 3.500l7 7M11 3.500l-7 7" stroke="#000" stroke-width="1.600"/></svg>
<div style="left:783px;top:105px;width:515px;height:432px;background:#3a7a72"></div>
<svg width="520" height="460" viewBox="0 0 1560 1380" style="left:780px;top:80px">
<rect x="20" y="85" width="1412" height="1187" fill="#000"/>
<rect x="33" y="195" width="477" height="477" fill="#ff0000"/><rect x="675" y="195" width="477" height="477" fill="#ff0000"/><rect x="1317" y="195" width="111" height="477" fill="#ff0000"/>
<path d="M510 342H675V492H648V672H696V840Q741 885 741 945A135 135 0 0 1 471 945Q471 885 516 840V528H510z" fill="#449900"/>
<circle cx="1155" cy="945" r="135" fill="#449900"/>
<rect x="1152" y="342" width="165" height="183" fill="#449900"/>
<path d="M66 228H477V328Q485 338 510 342V528Q485 532 477 544V639H66z" fill="#bd9500"/>
<path d="M708 228H1119V328Q1127 338 1152 342V528Q1127 532 1119 544V639H696V672H648V492H675V342Q700 338 708 328z" fill="#bd9500"/>
<path d="M1353 228H1428V639H1353V544Q1345 532 1317 528V342Q1345 338 1353 328z" fill="#bd9500"/>
<circle cx="514" cy="673" r="20" fill="#fff"/><path d="M514 653A20 20 0 0 1 514 693z" fill="#c070f0"/><path d="M514 653A20 20 0 0 0 494 673H514z" fill="#00e0f0"/>
</svg>
<div style="left:1258px;top:108px;width:2px;height:398px;background:#b8ecdf"></div>
<div style="left:1260px;top:108px;width:38px;height:398px;background:#4fc9a8;border:1px solid #3a7a72"></div>
<svg width="38" height="250" viewBox="0 0 38 250" style="left:1260px;top:108px">
<g transform="translate(2 0)">
<g id="pb1"><rect width="34" height="33" fill="#9cdcdc"/><path d="M0 0h34l-3 3H3v27l-3 3z" fill="#c8f2f0"/><path d="M34 33H0l3-3h28V3l3-3z" fill="#4a8f8a"/><rect x="5.500" y="5.500" width="23" height="22" fill="none" stroke="#000"/></g>
<use href="#pb1" y="35"/><use href="#pb1" y="70"/><use href="#pb1" y="105"/><use href="#pb1" y="140"/><use href="#pb1" y="175"/><use href="#pb1" y="210"/>
<g transform="translate(2 2) scale(.8)"><rect x="8" y="14" width="15" height="16" fill="none" stroke="#000" stroke-width="2"/><rect x="20" y="6" width="9" height="9" fill="none" stroke="#000" stroke-width="1.500"/><path d="M9 22l5-4v3h5v2h-5v3z"/></g>
<g transform="translate(2 37) scale(.8)"><use href="#AU"/></g><g transform="translate(2 72) scale(.8)"><use href="#AD"/></g><g transform="translate(2 107) scale(.8)"><use href="#AL"/></g><g transform="translate(2 142) scale(.8)"><use href="#AR"/></g><g transform="translate(2 177) scale(.8)"><use href="#ZO"/></g><g transform="translate(2 212) scale(.8)"><use href="#ZI"/></g>
</g></svg>
<div style="left:783px;top:506px;width:515px;height:3px;background:#b8ecdf"></div>
<div style="left:783px;top:509px;width:515px;height:28px;background:#3a7a72"></div>
<div class="b" style="left:786px;top:510px;width:509px;height:24px;border-color:#d0f4f2 #3a7a72 #3a7a72 #d0f4f2">Close</div>

<!-- results viewer -->
<div style="left:3px;top:473px;width:500px;height:392px;background:#c4c4c4;border:1px solid;border-color:#eee #555 #555 #eee"></div>
<div style="left:5px;top:475px;width:496px;height:20px;background:linear-gradient(90deg,#6e6e6e,#a8a8a8 55%,#c4c4c4)"></div>
<svg width="16" height="14" style="left:7px;top:478px"><rect x=".5" y=".5" width="15" height="13" fill="#f4f4d0" stroke="#444"/><rect x="1" y="1" width="14" height="3" fill="#224"/><path d="M4 6l8 6M12 6l-8 6" stroke="#a8a000" stroke-width="2"/></svg>
<div class="tb" style="left:25px;top:476px;color:#d0d0d0;letter-spacing:.1px">Results viewer</div>
<svg width="16" height="15" style="left:482px;top:477px"><rect x=".5" y=".5" width="15" height="14" fill="#d4d0c8" stroke="#333"/><path d="M4 4l8 7M12 4l-8 7" stroke="#000" stroke-width="1.800"/></svg>
<div style="left:5px;top:495px;width:496px;height:366px;background:#50c9a9;border:1px solid #2a6a60"></div>
<div class="b" style="left:7px;top:497px;width:491px;height:24px;background:#50c9a9;font:bold 14.600px 'Liberation Serif',serif;padding-top:3px;border-color:#a8e8e0 #2a8a78 #2a8a78 #a8e8e0">Solder Mask Checks</div>
<div style="left:6px;top:522px;width:494px;height:2px;background:#1c4a44"></div>
<!-- left column -->
<div style="left:6px;top:524px;width:169px;height:260px;border:1px solid #000;border-width:0 2px 2px 0"></div>
<div style="left:6px;top:524px;width:168px;height:30px;background:#1a6a5a"></div>
<div class="b" style="left:8px;top:527px;width:47px;height:24px;font:italic 13px 'Liberation Mono',monospace;padding-top:2px">None</div>
<div class="b" style="left:57px;top:526px;width:76px;height:27px;border-color:#9cdcdc;font:italic bold 15px 'Liberation Mono',monospace;padding-top:2px">Layers</div>
<div class="b" style="left:135px;top:527px;width:38px;height:24px;font:italic 13px 'Liberation Mono',monospace;padding-top:2px">All</div>
<div style="left:6px;top:554px;width:151px;height:180px;border:2px solid;border-color:#2a8a78 #b4ecdf #b4ecdf #2a8a78"></div>
<div class="m" style="left:11px;top:559px;width:140px;height:15px;background:#000;color:#a0e0d8;line-height:17px;margin-top:0">ts</div>
<div class="m" style="left:11px;top:577px;width:140px;height:15px;background:#000;color:#a0e0d8;line-height:17px;margin-top:0">bs</div>
<svg width="14" height="178" style="left:160px;top:555px"><path d="M7 2L13 12H1zM7 176L13 165H1z" fill="#9cdcdc" stroke="#2a8a78"/><rect x="2" y="15" width="10" height="147" fill="#50c9a9" stroke="#b4ecdf"/></svg>
<div style="left:7px;top:737px;width:149px;height:13px;background:#3fa58e"></div>
<svg width="150" height="13" style="left:7px;top:737px"><path d="M1 6.500L11 1V12zM147 6.500L137 1V12z" fill="#6ed4bc" stroke="#2a8a78"/><rect x="14" y="2" width="120" height="9" fill="#50c9a9" stroke="#b4ecdf"/></svg>
<div class="b" style="left:12px;top:753px;width:161px;height:29px;justify-content:flex-start;padding-left:4px;padding-top:2px;border-color:#c8f2f0 #2a8a78 #2a8a78 #c8f2f0">Replace layers</div>
<div style="left:153px;top:764px;width:12px;height:7px;background:#d0eeee;border:1px solid;border-color:#fff #4a8f8a #4a8f8a #fff"></div>
<!-- right column -->
<div style="left:177px;top:524px;width:323px;height:30px;background:#9cdcdc"></div>
<div style="left:175px;top:524px;width:3px;height:260px;background:#000"></div>
<div class="b" style="left:179px;top:527px;width:205px;height:26px;font:italic bold 15px 'Liberation Mono',monospace;padding-top:3px">Categories (7)</div>
<div class="m" style="left:386px;top:532px">Meas:</div>
<div class="b" style="left:437px;top:527px;width:60px;height:26px;justify-content:flex-start;padding-left:4px;padding-top:2px">All</div>
<div style="left:479px;top:537px;width:12px;height:6px;background:#d0eeee;border:1px solid;border-color:#fff #4a8f8a #4a8f8a #fff"></div>
<div style="left:178px;top:557px;width:303px;height:114px;background:#50c9a9;border:2px solid;border-color:#2a8a78 #b4ecdf #b4ecdf #2a8a78"></div>
<div class="m" style="left:182px;top:561px;width:293px;height:15px;background:#000;color:#6cd8bc;line-height:17px;margin-top:0">Coverage (659)</div>
<div class="m" style="left:182px;top:578px">Rout spacing (12)</div>
<div class="m" style="left:182px;top:596px">SMDs Clearance Bridge (57)</div>
<div class="m" style="left:182px;top:614px">SM slivers (8)</div>
<div class="m" style="left:182px;top:632px">Pad to Pad Spacing (110)</div>
<div class="m" style="left:182px;top:650px">Partial Clearance on VIA drilled</div>
<svg width="14" height="115" style="left:484px;top:557px"><path d="M7 2L13 12H1zM7 113L13 103H1z" fill="#6ed4bc" stroke="#2a8a78"/><rect x="2" y="15" width="10" height="70" fill="#50c9a9" stroke="#b4ecdf"/></svg>
<div style="left:179px;top:677px;width:301px;height:12px;background:#3fa58e"></div>
<svg width="301" height="12" style="left:179px;top:677px"><path d="M1 6L11 1V11zM299 6L289 1V11z" fill="#6ed4bc" stroke="#2a8a78"/><rect x="14" y="1.500" width="218" height="9" fill="#50c9a9" stroke="#b4ecdf"/></svg>
<div class="b" style="left:179px;top:693px;width:53px;height:22px">First</div>
<div class="b" style="left:236px;top:693px;width:44px;height:22px;font-weight:normal">&lt;---</div>
<div class="b" style="left:284px;top:693px;width:44px;height:22px;font-weight:normal">---&gt;</div>
<div class="b" style="left:332px;top:693px;width:44px;height:22px">Last</div>
<div class="m" style="left:380px;top:694px">Index:</div>
<div style="left:439px;top:692px;width:58px;height:23px;background:#50c9a9;border:2px solid;border-color:#2a8a78 #b4ecdf #b4ecdf #2a8a78"></div>
<div style="left:445px;top:692px;font:15px/20px 'Liberation Mono',monospace;color:#111;white-space:pre">2220</div>
<div style="left:444px;top:695px;width:1px;height:15px;background:#000"></div>
<div style="left:177px;top:717px;width:121px;height:33px;background:#9cdcdc;border-top:1px solid #000"></div>
<div class="b" style="left:184px;top:720px;width:114px;height:27px;justify-content:flex-start;padding-left:4px">Auto Zoom</div>
<div style="left:281px;top:731px;width:12px;height:6px;background:#d0eeee;border:1px solid;border-color:#fff #4a8f8a #4a8f8a #fff"></div>
<div style="left:300px;top:717px;width:30px;height:33px;background:#9cdcdc;border-left:1px solid #000;border-top:1px solid #000"></div>
<div class="m" style="left:302px;top:725px">Sv:</div>
<div style="left:330px;top:718px;width:68px;height:32px;background:#c03c3c;border:2px solid #c82020"></div>
<div class="b" style="left:335px;top:720px;width:60px;height:27px;background:#ff1c1c;border-color:#ff9a9a #a01010 #a01010 #ff9a9a;justify-content:flex-start;padding-left:8px;color:#400">!!</div>
<div style="left:376px;top:731px;width:13px;height:6px;background:#c8a0a0;border:1px solid;border-color:#fff #800 #800 #fff"></div>
<div style="left:402px;top:724px;width:14px;height:14px;background:#9cdcdc;border:1px solid;border-color:#c8f2f0 #4a8f8a #4a8f8a #c8f2f0"></div>
<svg width="12" height="12" style="left:403px;top:725px"><path d="M2 6l2 5 6-9" fill="none" stroke="#c01858" stroke-width="2.500"/></svg>
<div class="m" style="left:418px;top:723px">Show All</div>
<!-- small buttons -->
<div class="b" style="left:395px;top:752px;width:30px;height:30px"></div><div class="b" style="left:429px;top:752px;width:31px;height:30px"></div><div class="b" style="left:463px;top:752px;width:34px;height:30px"></div>
<svg width="102" height="24" style="left:397px;top:755px"><g fill="#9cdcdc" stroke="#000"><rect x="2.500" y=".5" width="23" height="22"/><rect x="36.500" y=".5" width="23" height="22"/><rect x="70.500" y=".5" width="27" height="22"/></g><g font-family="Liberation Mono" font-size="11" fill="#111"><text x="3" y="10">DEL</text><text x="37" y="10">REF</text><text x="71" y="10" font-size="10.500">UNDO</text></g><circle cx="14" cy="16" r="3.500" fill="#e00000"/><circle cx="48" cy="16" r="3.500" fill="#00d000"/><path d="M80 14q4-3 6 0t-2 6l-4 1 1-2" fill="none" stroke="#e8d820" stroke-width="1.500"/></svg>
<!-- status -->
<div style="left:6px;top:784px;width:494px;height:3px;background:#000"></div>
<div class="m" style="left:189px;top:787px">bs 0.39mil  r0</div>
<div style="left:6px;top:806px;width:494px;height:21px;background:#ffffd8;border:1px solid #000;border-width:1px 1px 1px 0"></div>
<div class="m" style="left:8px;top:808px">ERF--&gt; coverage = 2.5 6 8</div>
<div class="b" style="left:7px;top:830px;width:287px;height:29px">Close</div>
<div class="b" style="left:298px;top:830px;width:30px;height:29px"></div><div class="b" style="left:333px;top:830px;width:30px;height:29px"></div><div class="b" style="left:366px;top:830px;width:30px;height:29px"></div><div class="b" style="left:400px;top:830px;width:30px;height:29px"></div><div class="b" style="left:435px;top:830px;width:30px;height:29px"></div><div class="b" style="left:469px;top:830px;width:28px;height:29px;border:3px solid #a81818"></div>
<svg width="200" height="27" style="left:298px;top:831px">
<g transform="translate(4 3)"><rect width="21" height="21" fill="#000"/><rect x="12" width="9" height="12" fill="#ffe020"/><rect x="0" width="7" height="13" fill="#fff"/><rect x="8" y="3" width="1" height="2" fill="#fff"/><rect x="14" y="3" width="2" height="2" fill="#000"/></g>
<g transform="translate(40 3)"><rect x=".5" y=".5" width="20" height="20" fill="#000" stroke="#000"/><path d="M5 9h7M12 3h5v12h-5z" stroke="#e01010" stroke-width="2" fill="#e01010"/><circle cx="6" cy="9" r="3" fill="#e01010"/><rect x="3" y="17" width="15" height="2" fill="#ccc"/></g>
<g transform="translate(72 3)"><rect x=".5" y=".5" width="21" height="21" fill="none" stroke="#000"/><text x="1" y="14" font-family="Liberation Mono" font-size="9" font-weight="bold" fill="#111">REF</text><path d="M1 2l20 18M21 2L1 20" stroke="#e02828" stroke-width="1.800"/></g>
<g transform="translate(106 3)"><path d="M1 1h19v16l-4 4H1z" fill="#20f020" stroke="#000"/><text x="5" y="12" font-family="Liberation Sans" font-size="9" font-weight="bold" fill="#111">1</text><text x="11" y="16" font-family="Liberation Sans" font-size="10" font-weight="bold" fill="#111">2</text></g>
<g transform="translate(141 3)"><path d="M2 1h16v16l-4 4H2z" fill="#ffe820" stroke="#000"/><path d="M5 5h10M5 8h10M5 11h10M5 14h8" stroke="#000"/></g>
<g transform="translate(174 3)"><rect x=".5" y=".5" width="19" height="19" fill="#9cdcdc" stroke="#000"/><rect x="3" y="9" width="4" height="9" fill="#e02020"/><rect x="8" y="4" width="4" height="14" fill="#2030d0"/><rect x="13" y="6" width="4" height="12" fill="#c020c0"/><path d="M2 18h16" stroke="#000"/></g>
</svg>

<!-- desktop strip, taskbar -->
<div style="left:0;top:865px;width:1440px;height:8px;background:#3a6ea5"></div>
<div style="left:1203px;top:866px;width:237px;height:7px;background:#3fc49f"></div>
<div style="left:0;top:873px;width:1440px;height:27px;background:#d4d0c8;border-top:1px solid #fff"></div>

<!-- small floating toolbar -->
<div style="left:1125px;top:848px;width:77px;height:24px;background:#d4d0c8;border:1px solid;border-color:#fff #888 #888 #fff"></div>
<svg width="76" height="22" style="left:1126px;top:849px"><rect x="2" y="2" width="3" height="18" fill="#aaa"/><rect x="9" y="3" width="15" height="15" fill="#e05818" rx="2"/><text x="11" y="16" font-family="Liberation Sans" font-size="15" font-weight="bold" fill="#fff">S</text><path d="M29 1v20M59 1v20" stroke="#aaa"/><rect x="37" y="4" width="14" height="13" fill="#fff" stroke="#000"/><text x="40" y="15" font-family="Liberation Sans" font-size="12" font-weight="bold" fill="#111">?</text><path d="M63 7h7" stroke="#000" stroke-width="1.500"/><path d="M63 14h7l-3.500 4z" fill="#000"/></svg>

<!-- taskbar -->
<div class="task" style="left:2px;width:50px;border-color:#fff #404040 #404040 #fff;padding-left:21px;font-size:13px">开始<svg width="16" height="16" style="left:3px;top:3px"><rect x="2" y="3" width="5" height="5" fill="#e02020"/><rect x="8" y="3" width="5" height="5" fill="#20a020"/><rect x="2" y="9" width="5" height="5" fill="#2040d0"/><rect x="8" y="9" width="5" height="5" fill="#e8c020"/><rect x="1" y="1" width="14" height="14" fill="none" stroke="#000" stroke-dasharray="3 1"/></svg></div>
<div style="left:56px;top:875px;width:2px;height:23px;border-left:1px solid #888;border-right:1px solid #fff"></div><div style="left:60px;top:875px;width:3px;height:23px;background:#eeebe4;border:1px solid;border-color:#fff #888 #888 #fff"></div>
<svg width="70" height="18" style="left:67px;top:878px"><rect x="2" y="3" width="13" height="13" fill="#e0f0ff" stroke="#444"/><path d="M6 12L15 2" stroke="#c09020" stroke-width="2"/><circle cx="33" cy="9" r="7" fill="#fff0b0" stroke="#d89020" stroke-width="1.500"/><path d="M33 5v4h3" stroke="#a06010" fill="none"/><rect x="48" y="1" width="16" height="16" fill="#1830a0"/><circle cx="56" cy="9" r="6" fill="#2060c0"/><path d="M53 5l6 3-3 6z" fill="#b09020"/></svg>
<div style="left:139px;top:875px;width:2px;height:23px;border-left:1px solid #888;border-right:1px solid #fff"></div><div style="left:143px;top:875px;width:3px;height:23px;background:#eeebe4;border:1px solid;border-color:#fff #888 #888 #fff"></div>

<div class="task" style="left:150px;width:62px">兴森...<svg width="16" height="16"><path d="M8 1l2 5 5 1-4 4 1 4-4-2-4 2 1-4-4-4 5-1z" fill="#e09030" stroke="#b06020"/></svg></div>
<div class="task" style="left:216px;width:62px">Total ...<svg width="16" height="16"><rect x="1" y="1" width="14" height="14" fill="#1820a0"/><rect x="3" y="8" width="10" height="7" fill="#fff"/><path d="M3 10h10M3 12h10" stroke="#d02020"/><rect x="4" y="1" width="7" height="5" fill="#c0c0e0"/></svg></div>
<div class="task" style="left:282px;width:62px;font-size:11.500px">Genesis<svg width="16" height="16"><circle cx="8" cy="8" r="7" fill="#20a0a0" stroke="#106060"/><ellipse cx="8" cy="8" rx="4" ry="3" fill="#e8d020"/></svg></div>
<div class="task" style="left:348px;width:62px">Engin...<svg width="16" height="14"><rect x=".5" y=".5" width="15" height="13" fill="#f4f4d0" stroke="#444"/><rect x="1" y="1" width="14" height="3" fill="#224"/><path d="M4 6l8 6M12 6l-8 6" stroke="#a8a000" stroke-width="2"/></svg></div>
<div class="task" style="left:414px;width:62px">Progr...<svg width="16" height="14"><rect x=".5" y=".5" width="15" height="13" fill="#f4f4d0" stroke="#444"/><rect x="1" y="1" width="14" height="3" fill="#224"/><path d="M4 6l8 6M12 6l-8 6" stroke="#a8a000" stroke-width="2"/></svg></div>
<div class="task" style="left:480px;width:62px">pcbn...<svg width="16" height="16"><rect x="1" y="1" width="14" height="14" fill="#1830a0"/><circle cx="8" cy="8" r="6" fill="#2060c0"/><path d="M5 4l6 3-3 6z" fill="#b09020"/></svg></div>
<div class="task" style="left:546px;width:62px">部分...<svg width="16" height="16"><path d="M3 1h9l3 3v11H3z" fill="#fff" stroke="#345"/><rect x="1" y="3" width="9" height="8" fill="#2040b0"/><text x="2" y="10" font-family="Liberation Serif" font-size="8" font-weight="bold" fill="#fff">W</text></svg></div>
<div class="task" style="left:612px;width:62px">CAM...<svg width="16" height="16"><path d="M3 1h9l3 3v11H3z" fill="#fff" stroke="#345"/><rect x="1" y="3" width="9" height="8" fill="#108030"/><text x="2" y="10" font-family="Liberation Sans" font-size="8" font-weight="bold" fill="#fff">X</text></svg></div>
<div class="task" style="left:678px;width:62px">计算器<svg width="16" height="16"><rect x="1" y="2" width="15" height="12" fill="#106080" stroke="#023"/><rect x="3" y="4" width="11" height="3" fill="#a0e0f0"/><path d="M3 10h11M3 12h11" stroke="#fff" stroke-dasharray="2 1"/></svg></div>
<div class="task" style="left:744px;width:62px">兴森...<svg width="16" height="16"><path d="M8 1l2 5 5 1-4 4 1 4-4-2-4 2 1-4-4-4 5-1z" fill="#e09030" stroke="#b06020"/></svg></div>
<div class="task" style="left:810px;width:62px">6g0kj...<svg width="16" height="16"><rect x="3" y="1" width="10" height="14" fill="#fff" stroke="#222"/><path d="M5 5h6M5 8h6M5 11h6" stroke="#222"/></svg></div>
<div class="task" style="left:876px;width:62px;background:#e8e6e0;border-color:#404040 #fff #fff #404040">Grap...<svg width="16" height="14"><rect x=".5" y=".5" width="15" height="13" fill="#f4f4d0" stroke="#444"/><rect x="1" y="1" width="14" height="3" fill="#224"/><path d="M4 6l8 6M12 6l-8 6" stroke="#a8a000" stroke-width="2"/></svg></div>
<div class="task" style="left:942px;width:62px">CAM...<svg width="16" height="16"><ellipse cx="8" cy="9" rx="7" ry="5" fill="#20a0a0" stroke="#106060"/><circle cx="8" cy="9" r="2" fill="#123"/></svg></div>
<div class="task" style="left:1008px;width:62px">6g0kj...<svg width="16" height="14"><rect x=".5" y=".5" width="15" height="13" fill="#f4f4d0" stroke="#444"/><rect x="1" y="1" width="14" height="3" fill="#224"/><path d="M4 6l8 6M12 6l-8 6" stroke="#a8a000" stroke-width="2"/></svg></div>
<div class="task" style="left:1074px;width:62px">6G0K...<svg width="16" height="16"><path d="M3 1h9l3 3v11H3z" fill="#fff" stroke="#345"/><rect x="1" y="3" width="9" height="8" fill="#2040b0"/><text x="2" y="10" font-family="Liberation Serif" font-size="8" font-weight="bold" fill="#fff">W</text></svg></div>
<div class="task" style="left:1140px;width:62px">6G0K...<svg width="16" height="16"><path d="M3 1h9l3 3v11H3z" fill="#fff" stroke="#345"/><rect x="1" y="3" width="9" height="8" fill="#108030"/><text x="2" y="10" font-family="Liberation Sans" font-size="8" font-weight="bold" fill="#fff">X</text></svg></div>

<div style="left:1290px;top:876px;width:147px;height:22px;border:1px solid;border-color:#808080 #fff #fff #808080"></div>
<svg width="88" height="20" style="left:1293px;top:877px"><path d="M2 10l8-7 6 6-8 8z" fill="#e8d020" stroke="#222"/><path d="M19 17l8-12 8 12z" fill="#e02020"/><path d="M27 5l8 12h-8z" fill="#20a040"/><path d="M39 4l12 13M51 4L39 17" stroke="#402090" stroke-width="3"/><circle cx="61" cy="11" r="6" fill="#e8f0ff" stroke="#107080" stroke-width="2"/><path d="M61 3l3 7h-6z" fill="#e8b020"/><rect x="72" y="2" width="15" height="15" fill="#a8a880"/><circle cx="79" cy="10" r="5" fill="none" stroke="#fff" stroke-width="2"/></svg>
<div style="left:1399px;top:881px;font:12px/15px 'Liberation Sans',sans-serif;color:#111">5:40</div>
</body></html>
